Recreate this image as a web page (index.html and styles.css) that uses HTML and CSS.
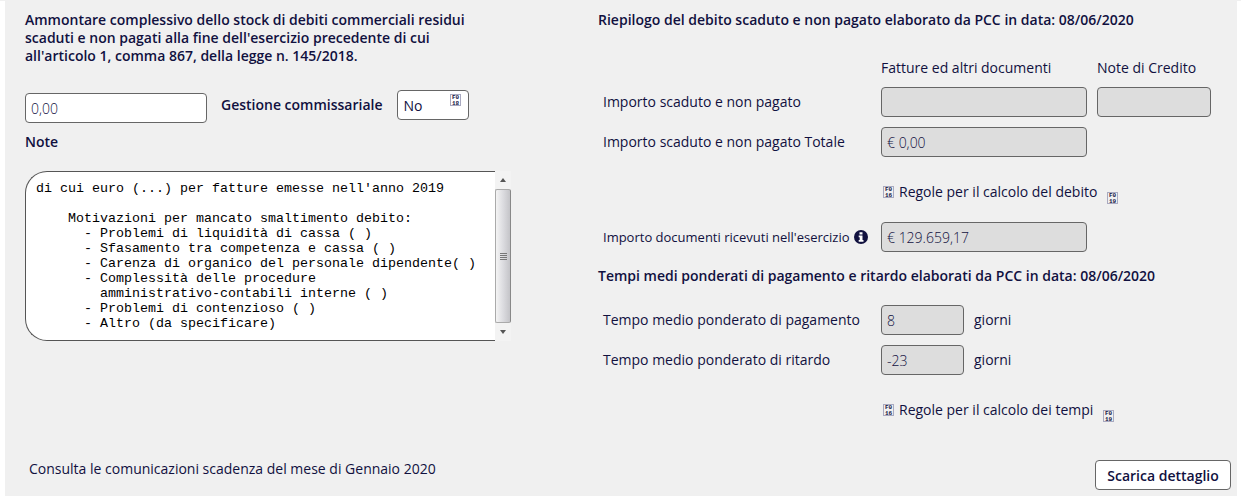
FILE: index.html
```html
<!DOCTYPE html>
<html lang="it">
<head>
    <meta charset="UTF-8">
    <meta name="viewport" content="width=device-width, initial-scale=1.0">
    <title>Stock del debito</title>
    <link rel="stylesheet" href="styles.css">
</head>
<body>
    <main class="panel">
        <form class="columns">
            <section class="col-debito">
                <label class="title" for="ammontare">Ammontare complessivo dello stock di debiti commerciali residui scaduti e non pagati alla fine dell'esercizio precedente di cui all'articolo 1, comma 867, della legge n. 145/2018.</label>
                <div class="importo-row">
                    <input type="text" id="ammontare" class="field importo" value="0,00">
                    <div class="gestione">
                        <label class="title" for="gestione">Gestione commissariale</label>
                        <div class="select-box">
                            <select id="gestione" class="field">
                                <option>No</option>
                                <option>Si</option>
                            </select>
                            <svg class="glyph select-glyph" viewBox="0 0 11 12" aria-hidden="true">
                                <rect x="0.5" y="0.5" width="10" height="11"/>
                                <text x="2" y="5">F0</text>
                                <text x="2" y="11">18</text>
                            </svg>
                        </div>
                    </div>
                </div>
                <label class="title note-label" for="note">Note</label>
                <div class="note-box">
                    <textarea id="note" wrap="off">di cui euro (...) per fatture emesse nell'anno 2019

    Motivazioni per mancato smaltimento debito:
      - Problemi di liquidità di cassa ( )
      - Sfasamento tra competenza e cassa ( )
      - Carenza di organico del personale dipendente( )
      - Complessità delle procedure
        amministrativo-contabili interne ( )
      - Problemi di contenzioso ( )
      - Altro (da specificare)</textarea>
                    <div class="scrollbar" aria-hidden="true">
                        <span class="arrow up"></span>
                        <span class="thumb"><i></i><i></i><i></i><i></i></span>
                        <span class="arrow down"></span>
                    </div>
                </div>
                <a href="#" class="consulta">Consulta le comunicazioni scadenza del mese di Gennaio 2020</a>
            </section>

            <section class="col-riepilogo">
                <h2 class="title">Riepilogo del debito scaduto e non pagato elaborato da PCC in data: 08/06/2020</h2>
                <div class="grid importi">
                    <span class="fatture">Fatture ed altri documenti</span>
                    <span id="credito">Note di Credito</span>
                    <label for="scaduto">Importo scaduto e non pagato</label>
                    <input type="text" id="scaduto" class="field" readonly>
                    <input type="text" class="field" aria-labelledby="credito" readonly>
                    <label for="totale">Importo scaduto e non pagato Totale</label>
                    <input type="text" id="totale" class="field" value="€ 0,00" readonly>
                </div>
                <a href="#" class="regole">
                    <svg class="glyph" viewBox="0 0 11 12" aria-hidden="true">
                        <rect x="0.5" y="0.5" width="10" height="11"/>
                        <text x="2" y="5">F0</text>
                        <text x="2" y="11">16</text>
                    </svg>
                    <span>Regole per il calcolo del debito</span>
                    <svg class="glyph download" viewBox="0 0 11 12" aria-hidden="true">
                        <rect x="0.5" y="0.5" width="10" height="11"/>
                        <text x="2" y="5">F0</text>
                        <text x="2" y="11">19</text>
                    </svg>
                </a>
                <div class="grid ricevuti">
                    <label class="small" for="ricevuti">Importo documenti ricevuti nell'esercizio
                        <svg class="info" viewBox="0 0 14 14" aria-hidden="true">
                            <circle cx="7" cy="7" r="7"/>
                            <path d="M5.5 2.3h3v2.2h-3zM4.7 5.5h3.8v4.4h1v1.8H4.7V9.9h1V7.3h-1z"/>
                        </svg>
                    </label>
                    <input type="text" id="ricevuti" class="field" value="€ 129.659,17" readonly>
                </div>
                <h2 class="title">Tempi medi ponderati di pagamento e ritardo elaborati da PCC in data: 08/06/2020</h2>
                <div class="grid tempi">
                    <label for="pagamento">Tempo medio ponderato di pagamento</label>
                    <input type="text" id="pagamento" class="field" value="8" readonly>
                    <span>giorni</span>
                    <label for="ritardo">Tempo medio ponderato di ritardo</label>
                    <input type="text" id="ritardo" class="field" value="-23" readonly>
                    <span>giorni</span>
                </div>
                <a href="#" class="regole">
                    <svg class="glyph" viewBox="0 0 11 12" aria-hidden="true">
                        <rect x="0.5" y="0.5" width="10" height="11"/>
                        <text x="2" y="5">F0</text>
                        <text x="2" y="11">16</text>
                    </svg>
                    <span>Regole per il calcolo dei tempi</span>
                    <svg class="glyph download" viewBox="0 0 11 12" aria-hidden="true">
                        <rect x="0.5" y="0.5" width="10" height="11"/>
                        <text x="2" y="5">F0</text>
                        <text x="2" y="11">19</text>
                    </svg>
                </a>
                <button type="button" class="scarica">Scarica dettaglio</button>
            </section>
        </form>
    </main>
</body>
</html>
```
FILE: styles.css
```css
* {
    box-sizing: border-box;
}
body {
    margin: 0;
    padding: 0 4px 5px 5px;
    border-top: 1px solid #f0f0f0;
    background: #fff;
    color: #11113f;
    font: 14px/18px "Open Sans", sans-serif;
}
.panel {
    background: #f0f0f0;
    padding: 10px 6px 6px 20px;
}
.columns {
    display: grid;
    grid-template-columns: minmax(486px, 1fr) 633px;
    gap: 86px;
}
.title {
    font-size: 14px;
    font-weight: 600;
    margin: 0;
}
a {
    color: inherit;
    text-decoration: none;
}

/* Fields */
.field {
    height: 30px;
    width: 100%;
    padding: 0 5px;
    border: 1px solid #666;
    border-radius: 4px;
    background: #fff;
    color: #11113f;
    font: 300 14px "Open Sans", sans-serif;
}
input.field:read-only {
    background: #ddd;
}
select.field {
    appearance: none;
    padding: 0 6px;
    font-weight: 400;
}

/* Left column */
.col-debito {
    display: flex;
    flex-direction: column;
    align-items: flex-start;
}
.col-debito > .title {
    max-width: 450px;
}
.importo-row {
    display: flex;
    align-items: flex-end;
    gap: 14px;
    margin-top: 25px;
}
.importo {
    width: 182px;
}
.gestione {
    display: flex;
    align-items: center;
    gap: 14px;
    padding-bottom: 3px;
}
.select-box {
    position: relative;
    width: 72px;
}
.select-glyph {
    position: absolute;
    top: 4px;
    right: 8px;
}
.note-label {
    margin-top: 10px;
}
.note-box {
    display: flex;
    width: 486px;
    height: 170px;
    margin-top: 20px;
}
textarea {
    flex: 1;
    height: 170px;
    padding: 9px 0 0 10px;
    border: 1px solid #555;
    border-right: none;
    border-radius: 22px 0 0 22px;
    background: #fff;
    color: #000;
    font-family: "Liberation Mono", monospace;
    line-height: 15px;
    resize: none;
    overflow: hidden;
}
.scrollbar {
    display: flex;
    flex-direction: column;
    width: 16px;
    background: #f3f3f3;
}
.thumb {
    flex: 1;
    display: flex;
    flex-direction: column;
    align-items: center;
    justify-content: center;
    gap: 1px;
    border: 1px solid #aaa;
    border-right-color: #888;
    border-radius: 2px;
    background: linear-gradient(to right, #f4f4f4, #dcdce0 50%, #c4c4c8);
}
.thumb i {
    width: 7px;
    height: 1px;
    background: #777;
}
.arrow {
    height: 18px;
    display: flex;
    align-items: center;
    justify-content: center;
}
.arrow::before {
    content: "";
    border: 3px solid transparent;
}
.up::before {
    border-top: none;
    border-bottom: 4px solid #555;
}
.down::before {
    border-bottom: none;
    border-top: 4px solid #555;
}
.consulta {
    margin: 119px 0 0 4px;
}

/* Right column */
.col-riepilogo {
    display: flex;
    flex-direction: column;
}
.grid {
    display: grid;
    grid-template-columns: 268px 206px 114px;
    gap: 10px;
    align-items: center;
    padding-left: 5px;
}
.fatture {
    grid-column: 2;
}
.importi {
    margin-top: 30px;
}
.regole {
    display: flex;
    align-items: center;
    gap: 5px;
    margin: 23px 0 0 285px;
}
.glyph {
    width: 11px;
    height: 12px;
}
.glyph rect {
    fill: none;
    stroke: #a9a9c0;
}
.glyph text {
    font: bold 6px "Liberation Mono", monospace;
    fill: #11113f;
}
.download {
    margin: 12px 0 0 5px;
}
.ricevuti {
    margin: 18px 0 15px;
}
.small {
    display: flex;
    align-items: center;
    gap: 4px;
    font-size: 13px;
    white-space: nowrap;
}
.info {
    width: 14px;
    height: 14px;
}
.info circle {
    fill: #11113f;
}
.info path {
    fill: #fff;
}
.tempi {
    grid-template-columns: 268px 83px 114px;
    margin-top: 20px;
}
.scarica {
    align-self: flex-end;
    width: 136px;
    height: 30px;
    margin-top: 38px;
    padding: 0;
    border: 1px solid #666;
    border-radius: 4px;
    background: #fff;
    color: #11113f;
    font: 600 14px "Open Sans", sans-serif;
}
```
